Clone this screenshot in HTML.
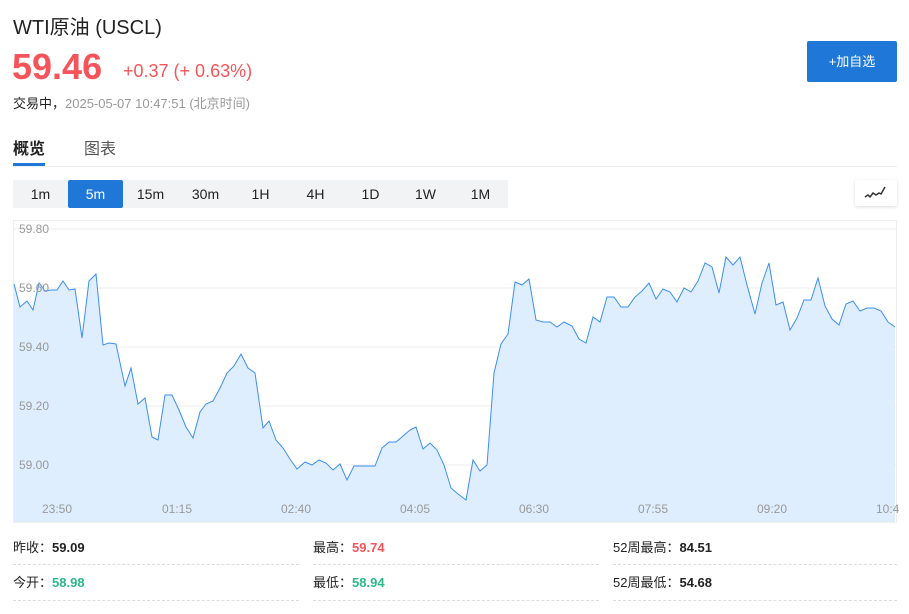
<!DOCTYPE html>
<html><head><meta charset="utf-8"><style>
body{margin:0;width:909px;height:614px;background:#fff;font-family:"Liberation Sans","Noto Sans CJK SC",sans-serif;position:relative;overflow:hidden;color:#222}
.a{position:absolute;white-space:nowrap}
.tf{position:absolute;top:180px;height:28px;width:55px;text-align:center;line-height:28px;font-size:14px;background:#f2f3f5;color:#222}
.lbl{font-size:13px;color:#222}
.dash{position:absolute;height:0;border-top:1px dashed #ddd}
</style></head><body>
<div class="a" style="left:13px;top:11px;font-size:20px;color:#222">WTI原油&nbsp;(USCL)</div>
<div class="a" style="left:12px;top:46px;font-size:36px;font-weight:bold;color:#f5555a">59.46</div>
<div class="a" style="left:123px;top:61px;font-size:18px;color:#f5555a">+0.37 (+ 0.63%)</div>
<div class="a" style="left:13px;top:93px;font-size:13px;color:#222">交易中，<span style="color:#999">2025-05-07 10:47:51 (北京时间)</span></div>
<div class="a" style="left:807px;top:41px;width:90px;height:41px;background:#1f78d8;color:#fff;font-size:13px;line-height:41px;text-align:center;border-radius:2px">+加自选</div>
<div class="a" style="left:13px;top:135px;font-size:16px;font-weight:bold;color:#222">概览</div>
<div class="a" style="left:84px;top:135px;font-size:16px;color:#555">图表</div>
<div class="a" style="left:13px;top:163px;width:32px;height:3px;background:#1f78d8"></div>
<div class="a" style="left:13px;top:166px;width:884px;height:1px;background:#eee"></div>
<div class="tf" style="left:13px">1m</div>
<div class="tf" style="left:68px;background:#1f78d8;color:#fff;border-radius:2px">5m</div>
<div class="tf" style="left:123px">15m</div>
<div class="tf" style="left:178px">30m</div>
<div class="tf" style="left:233px">1H</div>
<div class="tf" style="left:288px">4H</div>
<div class="tf" style="left:343px">1D</div>
<div class="tf" style="left:398px">1W</div>
<div class="tf" style="left:453px">1M</div>
<div class="a" style="left:855px;top:180px;width:42px;height:26px;background:#fff;box-shadow:0 1px 3px rgba(0,0,0,.15);border-radius:2px">
<svg width="42" height="26"><polyline points="10,17 13,15 15,17 18,13 21,15 24,13 26,14 30,7" fill="none" stroke="#333" stroke-width="1.5"/></svg></div>
<svg class="a" style="left:0;top:0" width="909" height="614">
<rect x="13.5" y="220.5" width="883" height="302" fill="#fff" stroke="#eee"/>
<g stroke="#eee"><line x1="14" x2="896" y1="229" y2="229"/><line x1="14" x2="896" y1="288" y2="288"/><line x1="14" x2="896" y1="347" y2="347"/><line x1="14" x2="896" y1="406" y2="406"/><line x1="14" x2="896" y1="465" y2="465"/></g>
<polygon fill="#deeefe" points="14,522 14,284 20,307 27,301 33,310 39,283 45,291 51,290 57,290 63,281 69,290 75,289 82,338 89,281 96,274 103,345 109,343 116,344 125,386 131,368 138,404 145,398 152,437 158,440 165,395 172,395 179,410 186,427 193,438 200,412 206,404 213,401 220,388 227,373 234,366 241,354 248,368 255,373 263,428 269,421 276,440 283,448 290,459 297,469 305,462 312,465 319,460 326,463 333,470 340,464 347,480 354,466 361,466 368,466 375,466 382,448 389,442 396,442 403,436 410,430 416,427 423,449 430,443 437,450 444,465 451,488 458,494 466,500 473,460 480,471 487,465 494,373 501,344 508,334 515,282 522,285 529,279 536,320 543,322 550,322 557,327 564,322 572,326 579,339 586,343 593,317 600,322 607,297 614,297 621,307 628,307 635,297 642,291 649,283 656,299 663,289 670,292 677,302 684,288 691,292 698,281 705,263 712,267 719,293 726,257 733,265 740,257 747,285 755,314 762,283 769,263 776,305 783,302 790,330 797,318 804,300 811,300 818,278 825,306 832,319 839,325 846,304 853,301 860,311 867,308 874,308 881,311 888,322 895,327 895,522"/>
<polyline fill="none" stroke="#3d8ff0" stroke-width="1" points="14,284 20,307 27,301 33,310 39,283 45,291 51,290 57,290 63,281 69,290 75,289 82,338 89,281 96,274 103,345 109,343 116,344 125,386 131,368 138,404 145,398 152,437 158,440 165,395 172,395 179,410 186,427 193,438 200,412 206,404 213,401 220,388 227,373 234,366 241,354 248,368 255,373 263,428 269,421 276,440 283,448 290,459 297,469 305,462 312,465 319,460 326,463 333,470 340,464 347,480 354,466 361,466 368,466 375,466 382,448 389,442 396,442 403,436 410,430 416,427 423,449 430,443 437,450 444,465 451,488 458,494 466,500 473,460 480,471 487,465 494,373 501,344 508,334 515,282 522,285 529,279 536,320 543,322 550,322 557,327 564,322 572,326 579,339 586,343 593,317 600,322 607,297 614,297 621,307 628,307 635,297 642,291 649,283 656,299 663,289 670,292 677,302 684,288 691,292 698,281 705,263 712,267 719,293 726,257 733,265 740,257 747,285 755,314 762,283 769,263 776,305 783,302 790,330 797,318 804,300 811,300 818,278 825,306 832,319 839,325 846,304 853,301 860,311 867,308 874,308 881,311 888,322 895,327"/>
<g font-size="12" fill="#999" font-family="Liberation Sans,sans-serif">
<text x="19" y="233">59.80</text><text x="19" y="292">59.60</text><text x="19" y="351">59.40</text><text x="19" y="410">59.20</text><text x="19" y="469">59.00</text>
<g text-anchor="middle"><text x="57" y="513">23:50</text><text x="177" y="513">01:15</text><text x="296" y="513">02:40</text><text x="415" y="513">04:05</text><text x="534" y="513">06:30</text><text x="653" y="513">07:55</text><text x="772" y="513">09:20</text></g>
<text x="876" y="513">10:4</text></g>
</svg>
<div class="a lbl" style="left:13px;top:537px">昨收：<b>59.09</b></div>
<div class="a lbl" style="left:313px;top:537px">最高：<b style="color:#f5555a">59.74</b></div>
<div class="a lbl" style="left:613px;top:537px">52周最高：<b>84.51</b></div>
<div class="a lbl" style="left:13px;top:572px">今开：<b style="color:#2bb88a">58.98</b></div>
<div class="a lbl" style="left:313px;top:572px">最低：<b style="color:#2bb88a">58.94</b></div>
<div class="a lbl" style="left:613px;top:572px">52周最低：<b>54.68</b></div>
<div class="dash" style="left:13px;top:564px;width:286px"></div>
<div class="dash" style="left:313px;top:564px;width:286px"></div>
<div class="dash" style="left:613px;top:564px;width:284px"></div>
<div class="dash" style="left:13px;top:600px;width:286px"></div>
<div class="dash" style="left:313px;top:600px;width:286px"></div>
<div class="dash" style="left:613px;top:600px;width:284px"></div>
</body></html>
